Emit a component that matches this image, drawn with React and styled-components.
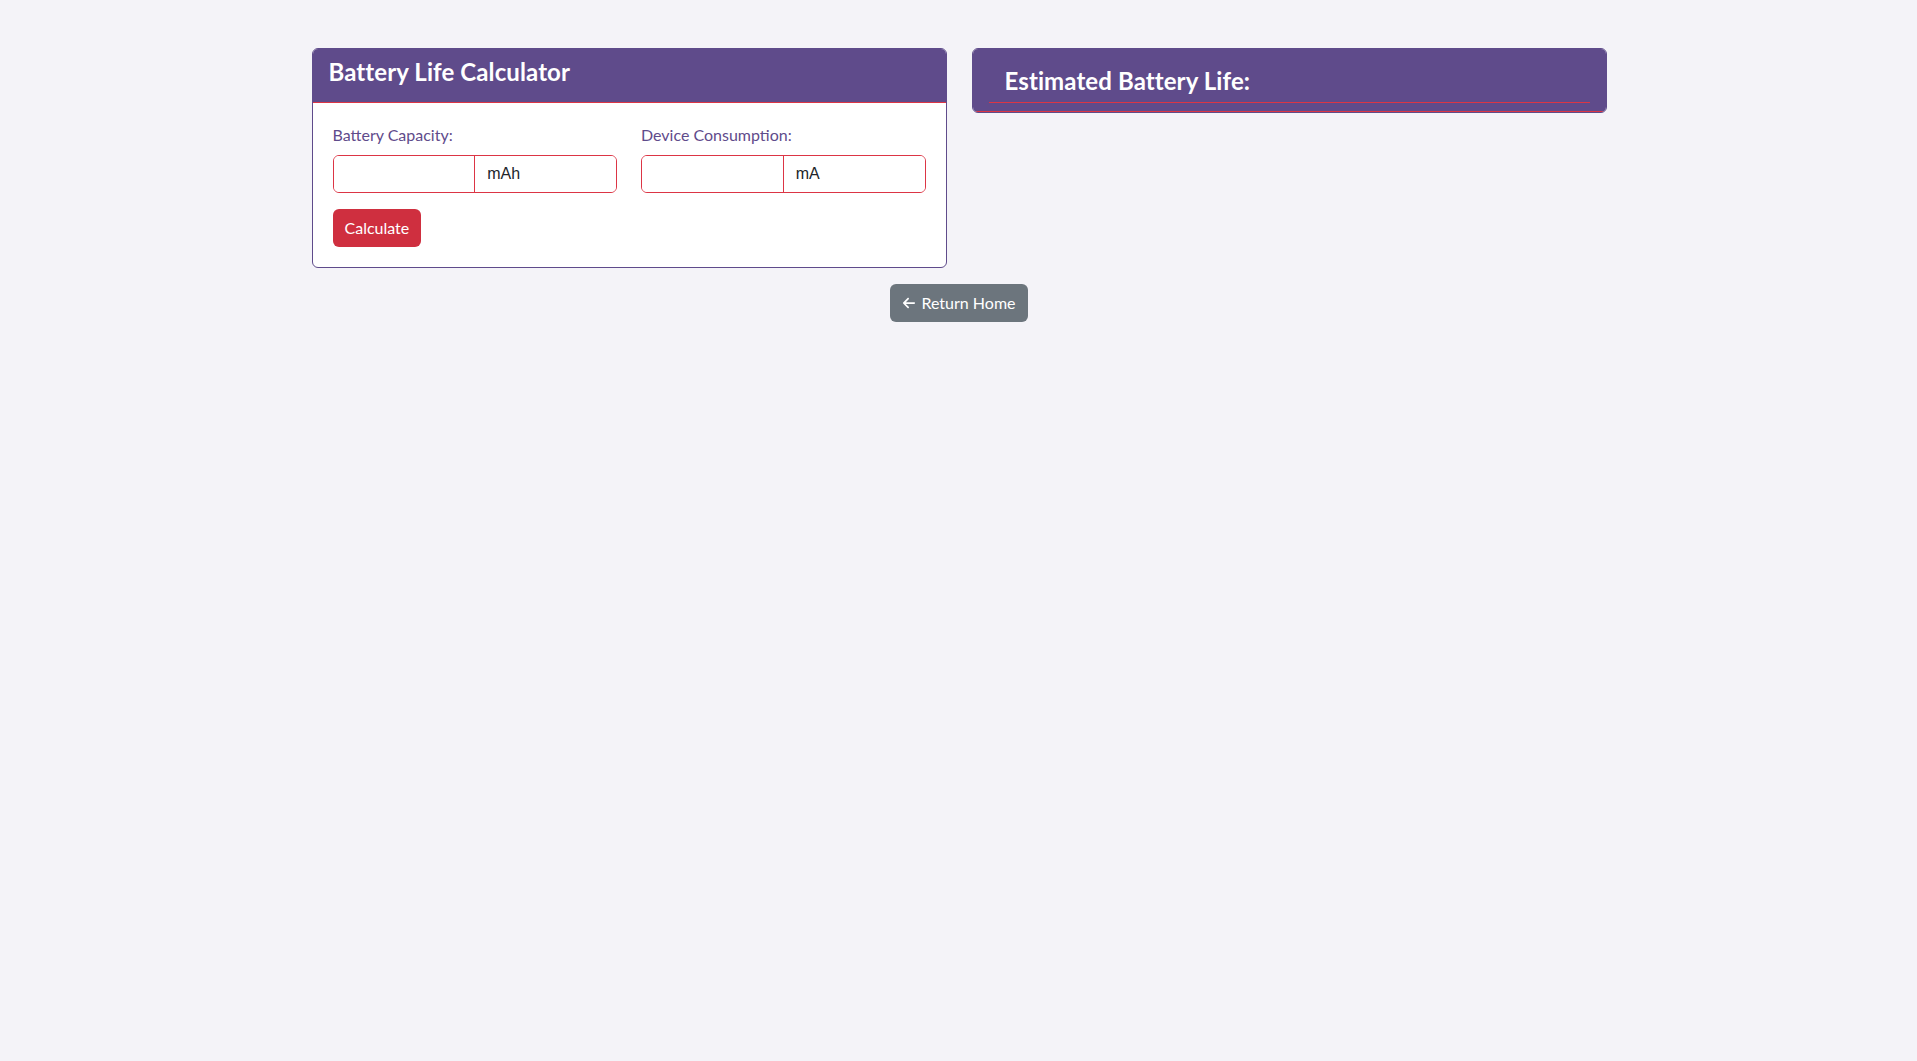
import React, { useState } from 'react'
import styled, { createGlobalStyle } from 'styled-components'

const purple = '#5f4b8b'
const red = '#dc3545'

const GlobalStyle = createGlobalStyle`
  * { box-sizing: border-box; }
  body {
    margin: 0;
    background: #f4f3f8;
    font-family: Lato, "Noto Sans", "Liberation Sans", sans-serif;
    font-size: 16px;
    line-height: 1.5;
    color: #212529;
  }
`

const Container = styled.div`
  max-width: 1320px;
  margin: 0 auto;
  padding: 48px 12px 0 13px;
`

const Row = styled.div`
  display: grid;
  grid-template-columns: minmax(0, 1fr) minmax(0, 1fr);
  column-gap: 25px;
  align-items: start;
`

const Card = styled.div`
  background: ${(props) => (props.filled ? purple : '#fff')};
  border: 1px solid ${purple};
  border-radius: 6px;
  overflow: hidden;
`

const CardHeader = styled.div`
  background: ${purple};
  color: #fff;
  padding: 8px 16px;
  border-bottom: 1px solid ${red};
`

const Title = styled.h4`
  margin: 0 0 ${(props) => (props.inset ? '0' : '7px')};
  padding: ${(props) => (props.inset ? '10px 16px 6px' : '1px 0 0')};
  border-bottom: ${(props) => (props.inset ? `1px solid ${red}` : 'none')};
  font-size: 24px;
  font-weight: 700;
  line-height: 1.2;
  letter-spacing: 0.1px;
`

const CardBody = styled.div`
  padding: 20px;
`

const Fields = styled.div`
  display: grid;
  grid-template-columns: minmax(0, 1fr) minmax(0, 1fr);
  column-gap: 24px;
  margin-bottom: 16px;
`

const Label = styled.label`
  display: block;
  color: ${purple};
  margin-bottom: 8px;
`

const InputGroup = styled.div`
  display: flex;
  border: 1px solid ${red};
  border-radius: 6px;
  overflow: hidden;
  height: 38px;
  background: #fff;
`

const Input = styled.input`
  flex: 1 1 0;
  width: 0;
  min-width: 0;
  border: none;
  border-right: ${(props) => (props.first ? `1px solid ${red}` : 'none')};
  padding: 6px 12px;
  font-family: "Liberation Sans", Arial, sans-serif;
  font-size: 16px;
  color: #212529;
  background: #fff;
  outline: none;
`

const Button = styled.button`
  display: inline-flex;
  align-items: center;
  gap: 5px;
  height: 38px;
  padding: 6px 12px;
  border: none;
  border-radius: 6px;
  background: ${(props) => (props.variant === 'secondary' ? '#6c757d' : '#cf2f3f')};
  color: #fff;
  font-family: inherit;
  font-size: 16px;
  line-height: 1.5;
  cursor: pointer;
`

const Footer = styled.div`
  display: flex;
  justify-content: center;
  margin-top: 16px;
`

const ArrowLeft = () => (
  <svg width="14" height="14" viewBox="0 0 448 512" fill="currentColor">
    <path d="M9.4 233.4c-12.5 12.5-12.5 32.8 0 45.3l160 160c12.5 12.5 32.8 12.5 45.3 0s12.5-32.8 0-45.3L109.2 288 416 288c17.7 0 32-14.3 32-32s-14.3-32-32-32l-306.7 0L214.6 118.6c12.5-12.5 12.5-32.8 0-45.3s-32.8-12.5-45.3 0l-160 160z" />
  </svg>
)

const App = () => {
  const [capacity, setCapacity] = useState('')
  const [consumption, setConsumption] = useState('')

  return (
    <>
      <GlobalStyle />
      <Container>
        <Row>
          <Card>
            <CardHeader>
              <Title>Battery Life Calculator</Title>
            </CardHeader>
            <CardBody>
              <Fields>
                <div>
                  <Label>Battery Capacity:</Label>
                  <InputGroup>
                    <Input first value={capacity} onChange={(e) => setCapacity(e.target.value)} />
                    <Input readOnly value="mAh" />
                  </InputGroup>
                </div>
                <div>
                  <Label>Device Consumption:</Label>
                  <InputGroup>
                    <Input first value={consumption} onChange={(e) => setConsumption(e.target.value)} />
                    <Input readOnly value="mA" />
                  </InputGroup>
                </div>
              </Fields>
              <Button>Calculate</Button>
            </CardBody>
          </Card>
          <Card filled>
            <CardHeader>
              <Title inset>Estimated Battery Life:</Title>
            </CardHeader>
          </Card>
        </Row>
        <Footer>
          <Button variant="secondary">
            <ArrowLeft /> Return Home
          </Button>
        </Footer>
      </Container>
    </>
  )
}

export default App
